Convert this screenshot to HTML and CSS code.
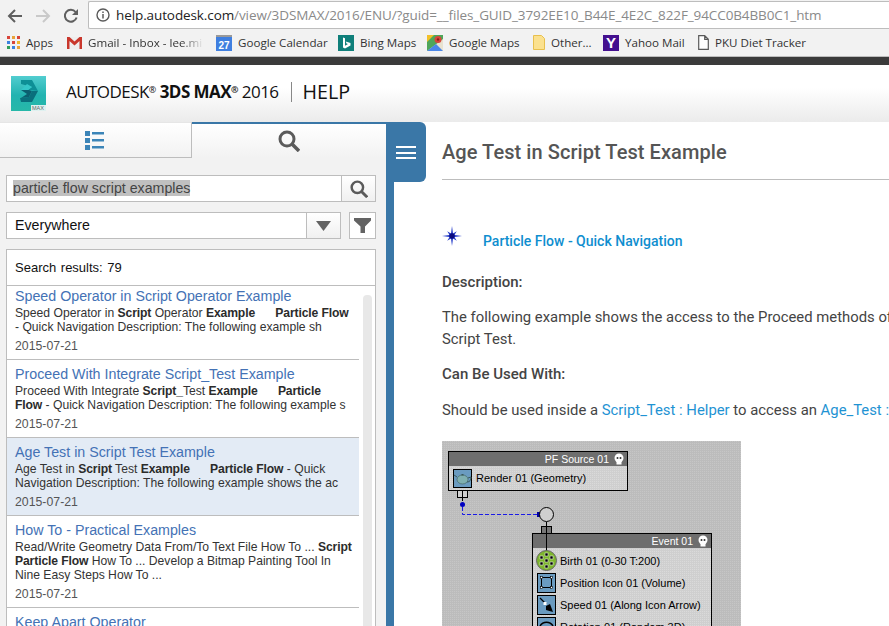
FILE: index.html
```html
<!DOCTYPE html>
<html lang="en">
<head>
<meta charset="utf-8">
<title>Age Test in Script Test Example</title>
<link rel="stylesheet" href="styles.css">
</head>
<body>
<div class="browser">
  <div class="toolbar">
    <svg class="nav" width="16" height="16" viewBox="0 0 16 16"><path d="M15 8H2.500M8 2 2 8l6 6" fill="none" stroke="#5f5f5f" stroke-width="2"/></svg>
    <svg class="nav" width="16" height="16" viewBox="0 0 16 16"><path d="M1 8h12.500M8 2l6 6-6 6" fill="none" stroke="#c9c9c9" stroke-width="2"/></svg>
    <svg class="nav" width="16" height="16" viewBox="0 0 16 16"><path d="M13.600 9.500A6 6 0 1 1 12.600 4" fill="none" stroke="#5f5f5f" stroke-width="2"/><path d="M15 1v6H9z" fill="#5f5f5f"/></svg>
    <div class="omnibox">
      <svg width="14" height="14" viewBox="0 0 14 14"><circle cx="7" cy="7" r="6" fill="none" stroke="#5a5a5a" stroke-width="1.400"/><path d="M7 6v4.500M7 3.500v1.500" stroke="#5a5a5a" stroke-width="1.500"/></svg>
      <span class="url"><span class="host">help.autodesk.com</span>/view/3DSMAX/2016/ENU/?guid=__files_GUID_3792EE10_B44E_4E2C_822F_94CC0B4BB0C1_htm</span>
    </div>
  </div>
  <div class="bookmarks">
    <span class="bm bm-apps"><svg width="13" height="13" viewBox="0 0 13 13"><rect width="3" height="3" fill="#d9453a"/><rect x="5" width="3" height="3" fill="#e8a33a"/><rect x="10" width="3" height="3" fill="#d9453a"/><rect y="5" width="3" height="3" fill="#3b82e0"/><rect x="5" y="5" width="3" height="3" fill="#d9453a"/><rect x="10" y="5" width="3" height="3" fill="#f0b82e"/><rect y="10" width="3" height="3" fill="#2f9e58"/><rect x="5" y="10" width="3" height="3" fill="#3b82e0"/><rect x="10" y="10" width="3" height="3" fill="#e8a33a"/></svg>Apps</span>
    <span class="bm bm-gmail"><svg width="15" height="12" viewBox="0 0 15 12"><rect width="15" height="12" fill="#eee"/><path d="M0 0h2.500l5 4.500 5-4.500H15v12h-2.500V4l-5 4.500L2.500 4v8H0z" fill="#c9372c"/></svg><span class="fade">Gmail - Inbox - lee.mi</span></span>
    <span class="bm bm-cal"><span class="cal">27</span>Google Calendar</span>
    <span class="bm bm-bing"><span class="bing"><svg width="16" height="16" viewBox="0 0 16 16"><path d="M5 2.500 7 3.200v7.600l3-1.700-1.500-.7-.8-2 4.800 1.700v2.400L7 13.500 5 12.400z" fill="#fff"/></svg></span>Bing Maps</span>
    <span class="bm bm-maps"><svg width="16" height="16" viewBox="0 0 16 16"><rect width="16" height="16" fill="#4fa65a"/><path d="M0 16 16 4v12z" fill="#e8e2d0"/><path d="M0 16 9 9l7 7z" fill="#4a86e8"/><path d="M0 0h7L0 7z" fill="#f2c029"/><circle cx="11" cy="4.500" r="3.500" fill="#d9453a"/><circle cx="11" cy="4.500" r="1.200" fill="#8a1f18"/></svg>Google Maps</span>
    <span class="bm bm-other"><svg width="12" height="15" viewBox="0 0 12 15"><path d="M.5.500h8l3 3v11H.5z" fill="#fbe18f" stroke="#e8c04e"/></svg>Other...</span>
    <span class="bm bm-yahoo"><span class="yahoo">Y</span>Yahoo Mail</span>
    <span class="bm"><svg width="11" height="15" viewBox="0 0 11 15"><path d="M.7.700h6l3.600 3.600v10H.7zM6.700.700v3.600h3.600" fill="#fff" stroke="#5a5a5a" stroke-width="1.200"/></svg>PKU Diet Tracker</span>
  </div>
  <div class="darkbar"></div>
</div>

<header class="apphead">
  <svg class="logo" width="35" height="35" viewBox="0 0 35 35"><defs><linearGradient id="lg" x1="0" y1="0" x2="0" y2="1"><stop offset="0" stop-color="#52cdd0"/><stop offset=".55" stop-color="#22b3b0"/><stop offset="1" stop-color="#27b8a8"/></linearGradient></defs><rect width="35" height="35" fill="url(#lg)"/><path d="M10 4h11l6 11-10-1 4-3-11-3z" fill="#0d8f96"/><path d="M27 15 21 26H10l-1-4 9-1 3-6z" fill="#0a6f7c"/><path d="M10 14h8l3 1-3 6-8 1 6-4z" fill="#0b5f70"/><path d="M16 8l5 3-4 3-7 0z" fill="#35c6c8"/><rect x="20" y="29" width="15" height="6" fill="#dff1f0"/><text x="21" y="34" font-family="'Liberation Sans',sans-serif" font-size="5.500" fill="#5c6b6b">MAX</text></svg>
  <span class="brand">AUTODESK<sup>®</sup> <b>3DS MAX<sup>®</sup></b> 2016</span>
  <span class="help">HELP</span>
</header>

<div class="main">
  <aside class="side">
    <div class="tabs">
      <div class="tab tab-toc"><svg width="19" height="19" viewBox="0 0 19 19"><path d="M0 0h5v5H0zM0 7h5v5H0zM0 14h5v5H0zM7 1h12v2.500H7zM7 8h12v2.500H7zM7 15h12v2.500H7z" fill="#3c85b8"/></svg></div>
      <div class="tab tab-search"><svg width="22" height="22" viewBox="0 0 22 22"><circle cx="9" cy="9" r="7" fill="none" stroke="#5b5b5b" stroke-width="3"/><path d="m14 14 7 7" stroke="#5b5b5b" stroke-width="3.500"/></svg></div>
    </div>
    <div class="panel">
      <div class="field">
        <span class="input"><span class="selected">particle flow script examples</span></span>
        <span class="fbtn fbtn-search"><svg width="18" height="18" viewBox="0 0 22 22"><circle cx="9" cy="9" r="7" fill="none" stroke="#5b5b5b" stroke-width="3"/><path d="m14 14 7 7" stroke="#5b5b5b" stroke-width="3.500"/></svg></span>
      </div>
      <div class="selrow">
        <div class="field field-sel">
          <span class="input input-sel">Everywhere</span>
          <span class="fbtn fbtn-drop"><svg width="16" height="10" viewBox="0 0 16 10"><path d="M0 0h15L7.500 10z" fill="#636363"/></svg></span>
        </div>
        <span class="filter"><svg width="17" height="15" viewBox="0 0 17 15"><path d="M0 0h17v2.500l-6 6V15H6.500V8.500l-6.500-6z" fill="#636363"/></svg></span>
      </div>
      <div class="results">
        <div class="count">Search results: 79</div>
        <div class="listwrap">
          <ul class="list">
            <li class="item">
              <a class="ititle">Speed Operator in Script Operator Example</a>
              <p class="snip">Speed Operator in <b>Script</b> Operator <b>Example</b> &nbsp; &nbsp; &nbsp;<b>Particle Flow</b><br>- Quick Navigation Description: The following example sh</p>
              <p class="date">2015-07-21</p>
            </li>
            <li class="item">
              <a class="ititle">Proceed With Integrate Script_Test Example</a>
              <p class="snip">Proceed With Integrate <b>Script_</b>Test <b>Example</b> &nbsp; &nbsp; &nbsp;<b>Particle</b><br><b>Flow</b> - Quick Navigation Description: The following example s</p>
              <p class="date">2015-07-21</p>
            </li>
            <li class="item item-on">
              <a class="ititle">Age Test in Script Test Example</a>
              <p class="snip">Age Test in <b>Script</b> Test <b>Example</b> &nbsp; &nbsp; &nbsp;<b>Particle Flow</b> - Quick<br>Navigation Description: The following example shows the ac</p>
              <p class="date">2015-07-21</p>
            </li>
            <li class="item">
              <a class="ititle">How To - Practical Examples</a>
              <p class="snip">Read/Write Geometry Data From/To Text File How To ... <b>Script</b><br><b>Particle Flow</b> How To ... Develop a Bitmap Painting Tool In<br>Nine Easy Steps How To ...</p>
              <p class="date">2015-07-21</p>
            </li>
            <li class="item">
              <a class="ititle">Keep Apart Operator</a>
            </li>
          </ul>
          <div class="scrolltrack"></div>
        </div>
      </div>
    </div>
  </aside>

  <div class="rail"><button class="burger" type="button"><i></i><i></i><i></i></button></div>

  <main class="content">
    <h1 class="ctitle">Age Test in Script Test Example</h1>
    <div class="qnav">
      <svg class="star" width="20" height="20" viewBox="0 0 20 20"><path d="M10 0 11 7.600 14.800 5.200 12.400 9 20 10 12.400 11 14.800 14.800 11 12.400 10 20 9 12.400 5.200 14.800 7.600 11 0 10 7.600 9 5.200 5.200 9 7.600z" fill="#2038c8"/><circle cx="10" cy="10" r="2.700" fill="#0a0a80"/></svg>
      <a class="qlink">Particle Flow - Quick Navigation</a>
    </div>
    <p class="para strong para-desc">Description:</p>
    <p class="para para-body">The following example shows the access to the Proceed methods of the<br>Script Test.</p>
    <p class="para strong">Can Be Used With:</p>
    <p class="para">Should be used inside a <a class="lnk">Script_Test : Helper</a> to access an <a class="lnk">Age_Test : Test</a></p>
    <svg class="diagram" width="299" height="200" viewBox="0 0 299 200" font-family="'Liberation Sans',sans-serif" font-size="11">
      <defs>
        <pattern id="dots" width="2" height="2" patternUnits="userSpaceOnUse"><rect width="2" height="2" fill="#bcbcbc"/><rect width="1" height="1" fill="#c6c6c6"/></pattern>
        <pattern id="dots2" width="2" height="2" patternUnits="userSpaceOnUse"><rect width="2" height="2" fill="#cfcfcf"/><rect width="1" height="1" fill="#dadada"/></pattern>
        <g id="bulb"><circle cx="0" cy="-1" r="4.500" fill="#fff"/><rect x="-2.500" y="2.500" width="5" height="3" fill="#fff"/><circle cx="-1.500" cy="-1" r="1" fill="#333"/><circle cx="1.500" cy="-1" r="1" fill="#333"/></g>
      </defs>
      <rect width="299" height="200" fill="url(#dots)"/>
      <!-- PF Source -->
      <rect x="6.500" y="10.500" width="179" height="39" fill="url(#dots2)" stroke="#000"/>
      <rect x="7" y="11" width="178" height="14" fill="#6e6e6e"/>
      <text x="167" y="22" text-anchor="end" fill="#fff" font-size="10.500">PF Source 01</text>
      <use href="#bulb" x="177" y="18"/>
      <rect x="11.500" y="28.500" width="18" height="18" fill="#6a9bc0" stroke="#000"/>
      <ellipse cx="20.500" cy="38.500" rx="5.500" ry="4.500" fill="#7fb0b0" stroke="#3a5a5a" stroke-width=".6"/>
      <path d="M15 36l-3-2M26 37l3-1c0 3-1 5-4 5" fill="none" stroke="#3a5a5a"/>
      <rect x="19.500" y="33" width="2" height="1.500" fill="#3a5a5a"/>
      <text x="34" y="41" fill="#000">Render 01 (Geometry)</text>
      <rect x="15.500" y="49.500" width="10" height="7" fill="#d0d0d0" stroke="#000"/>
      <path d="M20.500 49.500V60" stroke="#000"/>
      <circle cx="20.500" cy="63.500" r="2.500" fill="#0000c0"/>
      <path d="M20.500 66v7.500H95" stroke="#1a1ae6" stroke-dasharray="4 2" fill="none"/>
      <rect x="95" y="71" width="6" height="5" fill="#0000a0"/>
      <path d="M100 73.500h4" stroke="#000"/>
      <circle cx="104.500" cy="73.500" r="7" fill="#cfcfcf" stroke="#000"/>
      <!-- Event -->
      <rect x="99.500" y="85.500" width="10" height="7" fill="#777" stroke="#000"/>
      <rect x="90.500" y="92.500" width="179" height="120" fill="url(#dots2)" stroke="#000"/>
      <rect x="91" y="93" width="178" height="14" fill="#6e6e6e"/>
      <text x="251" y="104" text-anchor="end" fill="#fff" font-size="10.500">Event 01</text>
      <use href="#bulb" x="261" y="100"/>
      <path d="M104.500 81v30" stroke="#000"/>
      <circle cx="104.500" cy="119.500" r="10" fill="#7db52e" stroke="#666"/>
      <g fill="#000" stroke="#fff" stroke-width=".5"><rect x="103" y="112" width="3" height="3"/><rect x="98" y="115" width="3" height="3"/><rect x="108" y="115" width="3" height="3"/><rect x="103" y="118" width="3" height="3"/><rect x="98" y="121" width="3" height="3"/><rect x="108" y="121" width="3" height="3"/><rect x="103" y="124" width="3" height="3"/></g>
      <text x="118" y="124" fill="#000">Birth 01 (0-30 T:200)</text>
      <rect x="95.500" y="132.500" width="18" height="19" fill="#6a9bc0" stroke="#000"/>
      <rect x="99.500" y="136.500" width="10" height="10" fill="none" stroke="#000"/>
      <g fill="#fff" stroke="#000" stroke-width=".6"><rect x="98.500" y="135.500" width="2" height="2"/><rect x="108.500" y="135.500" width="2" height="2"/><rect x="98.500" y="145.500" width="2" height="2"/><rect x="108.500" y="145.500" width="2" height="2"/></g>
      <text x="118" y="146" fill="#000">Position Icon 01 (Volume)</text>
      <rect x="95.500" y="154.500" width="18" height="19" fill="#6a9bc0" stroke="#000"/>
      <path d="m98 157 6 6" stroke="#000" stroke-width="1.200"/><rect x="101.500" y="161" width="3" height="3" fill="#fff"/><path d="m104 165 4-2 3 8-7-2z" fill="#000"/>
      <text x="118" y="168" fill="#000">Speed 01 (Along Icon Arrow)</text>
      <rect x="95.500" y="176.500" width="18" height="19" fill="#6a9bc0" stroke="#000"/>
      <path d="M98 185c3-5 10-5 13 0M99 190c3-3 8-3 10 0" stroke="#000" stroke-width="1.500" fill="none"/>
      <text x="118" y="190" fill="#000">Rotation 01 (Random 3D)</text>
    </svg>
  </main>
</div>
</body>
</html>
```

FILE: styles.css
```css
html, body {
  margin: 0;
  height: 626px;
  overflow: hidden;
  background: #fff;
}

body {
  width: 889px;
  display: flex;
  flex-direction: column;
  font-family: "Liberation Sans", Arial, sans-serif;
}

p, h1, ul { margin: 0; padding: 0; }

/* browser chrome */
.browser { flex: none; background: #f2f2f2; }

.toolbar {
  height: 34px;
  box-sizing: border-box;
  padding: 1px 0 0 7px;
  display: flex;
  align-items: flex-start;
}

.nav { margin: 7px 12px 0 0; flex: none; }

.omnibox {
  flex: 1;
  height: 28px;
  margin-left: -3px;
  box-sizing: border-box;
  background: #fff;
  border: 1px solid #bdbdbd;
  border-right: 0;
  border-radius: 2px 0 0 2px;
  display: flex;
  align-items: center;
  gap: 6px;
  padding-left: 7px;
  overflow: hidden;
  white-space: nowrap;
}

.url {
  font: 13.500px "Open Sans", sans-serif;
  color: #8a8a8a;
  letter-spacing: -.1px;
}

.host { color: #222; }

.bookmarks {
  height: 23px;
  border-bottom: 1px solid #bdbdbd;
  box-sizing: border-box;
  display: flex;
  align-items: center;
  padding: 0 0 5px 7px;
  font: 11.600px "Open Sans", sans-serif;
  color: #333;
  white-space: nowrap;
  overflow: hidden;
}

.bm { display: flex; align-items: center; gap: 6px; flex: none; }

.bm-apps { width: 60px; }
.bm-gmail { width: 149px; }
.bm-cal { width: 122px; }
.bm-bing { width: 89px; }
.bm-maps { width: 106px; }
.bm-other { width: 70px; }
.bm-yahoo { width: 95px; }

.fade {
  width: 116px;
  overflow: hidden;
  -webkit-mask-image: linear-gradient(90deg, #000 80%, transparent);
  mask-image: linear-gradient(90deg, #000 80%, transparent);
}

.cal {
  width: 16px;
  height: 16px;
  box-sizing: border-box;
  padding-top: 3px;
  background: #3f7fe0;
  border-top: 2px solid #9a9a9a;
  color: #fff;
  font: bold 10px/11px "Liberation Sans", sans-serif;
  text-align: center;
}

.bing {
  width: 16px;
  height: 16px;
  background: #0f7f7a;
  display: block;
  line-height: 0;
}

.yahoo {
  width: 16px;
  height: 16px;
  background: #44108f;
  color: #fff;
  font: bold 15px/16px "Liberation Sans", sans-serif;
  text-align: center;
}

.darkbar { height: 8px; background: #3b3b3b; }

/* app header */
.apphead {
  flex: none;
  height: 57px;
  box-sizing: border-box;
  background: linear-gradient(#fff 40%, #ebebeb);
  display: flex;
  align-items: center;
  padding: 0 0 4px 11px;
  color: #111;
  white-space: nowrap;
}

.logo { flex: none; margin: 4px 20px 0 0; }

.brand {
  font: 17px "Open Sans", sans-serif;
  letter-spacing: -.55px;
  padding-right: 12px;
  border-right: 1px solid #888;
  line-height: 20px;
}

.brand b { font-weight: 700; }

.brand sup { font-size: 9px; line-height: 0; vertical-align: 5px; }

.help {
  font: 19.700px "Open Sans", sans-serif;
  margin-left: 11px;
}

/* main row */
.main {
  flex: 1;
  min-height: 0;
  display: flex;
}

.side {
  width: 386px;
  flex: none;
  background: #f2f2f2;
  display: flex;
  flex-direction: column;
}

.tabs { display: flex; height: 36px; flex: none; }

.tab {
  display: flex;
  align-items: center;
  justify-content: center;
  box-sizing: border-box;
}

.tab-toc {
  width: 192px;
  padding-right: 2px;
  background: linear-gradient(#fff, #f2f2f2);
  border-right: 1px solid #bdbdbd;
  border-bottom: 1px solid #bdbdbd;
  border-top: 1px solid #e6e6e6;
}

.tab-search {
  flex: 1;
  border-top: 2px solid #3a77a7;
  background: linear-gradient(#fff, #f2f2f2);
}

.panel {
  flex: 1;
  min-height: 0;
  padding: 17px 10px 0 6px;
  display: flex;
  flex-direction: column;
  gap: 10px;
}

.field {
  display: flex;
  height: 27px;
  box-sizing: border-box;
  border: 1px solid #bdbdbd;
  background: #fff;
}

.input {
  flex: 1;
  font-size: 14.200px;
  line-height: 25px;
  padding-left: 6px;
  color: #333;
}

.input-sel { padding-left: 8px; color: #111; }

.selected {
  background: #c0c0c0;
  color: #444;
  display: inline-block;
  line-height: 16px;
}

.fbtn {
  width: 34px;
  flex: none;
  box-sizing: border-box;
  border-left: 1px solid #bdbdbd;
  background: linear-gradient(#fff, #f0f0f0);
  display: flex;
  align-items: center;
  justify-content: center;
}

.selrow { display: flex; gap: 8px; }

.field-sel { flex: 1; }

.filter {
  width: 27px;
  height: 27px;
  flex: none;
  box-sizing: border-box;
  border: 1px solid #bdbdbd;
  background: #fff;
  display: flex;
  align-items: center;
  justify-content: center;
}

.results {
  flex: 1;
  min-height: 0;
  background: #fff;
  border: 1px solid #bdbdbd;
  border-bottom: 0;
  display: flex;
  flex-direction: column;
}

.count {
  height: 36px;
  flex: none;
  box-sizing: border-box;
  border-bottom: 1px solid #bdbdbd;
  font-size: 13px;
  word-spacing: 1px;
  line-height: 35px;
  padding-left: 8px;
  color: #111;
}

.listwrap {
  flex: 1;
  min-height: 0;
  display: flex;
  overflow: hidden;
  background: #fff;
}

.list {
  width: 352px;
  flex: none;
  list-style: none;
}

.item {
  box-sizing: border-box;
  padding: 6px 0 6px 8px;
  border-bottom: 1px solid #bdbdbd;
  white-space: nowrap;
}

.item:first-child { padding-top: 2px; }

.item-on { background: #e3ebf5; }

.ititle {
  display: block;
  font-size: 14.250px;
  line-height: 17px;
  color: #4472b5;
}

.snip {
  font-size: 12.150px;
  line-height: 14px;
  color: #333;
  margin-top: 1px;
}

.snip b { color: #2b2b2b; letter-spacing: -.12px; }

.date {
  font-size: 12.300px;
  line-height: 14px;
  margin-top: 5px;
  color: #555;
}

.scrolltrack {
  width: 9px;
  margin: 9px 0 0 4px;
  background: #e8e8e8;
  border-radius: 4px 4px 0 0;
  flex: none;
}

/* rail */
.rail {
  width: 8px;
  flex: none;
  background: #3a77a7;
  position: relative;
}

.burger {
  position: absolute;
  left: 0;
  top: 0;
  width: 40px;
  height: 60px;
  padding: 24px 10px 0;
  border: 0;
  background: #3a77a7;
  border-radius: 0 6px 6px 0;
  display: flex;
  flex-direction: column;
  gap: 3.500px;
  box-sizing: border-box;
}

.burger i { display: block; width: 20px; height: 2px; background: #fff; flex: none; }

/* content */
.content {
  flex: 1;
  min-width: 0;
  padding-left: 48px;
  overflow: hidden;
  font-family: Roboto, sans-serif;
  white-space: nowrap;
  background: #fff;
}

.ctitle {
  font: 500 20px/24px Roboto, sans-serif;
  letter-spacing: .07px;
  color: #555;
  padding: 18px 0 15px;
  border-bottom: 1px solid #bdbdbd;
}

.qnav {
  display: flex;
  align-items: flex-start;
  gap: 21px;
  margin-top: 45px;
  height: 46px;
}

.star { margin-top: 1px; flex: none; }

.qlink {
  font: 500 14px/16px Roboto, sans-serif;
  color: #0f8ecf;
  margin-top: 8px;
}

.para {
  font-size: 14.850px;
  line-height: 22px;
  margin-bottom: 14px;
  color: #444;
}

.para-desc { margin-bottom: 13px; }

.para-body { margin-bottom: 13px; }

.strong { font-weight: 500; font-size: 15px; }

.lnk { color: #1f93d3; }

.diagram { display: block; margin-top: 20px; }
```
